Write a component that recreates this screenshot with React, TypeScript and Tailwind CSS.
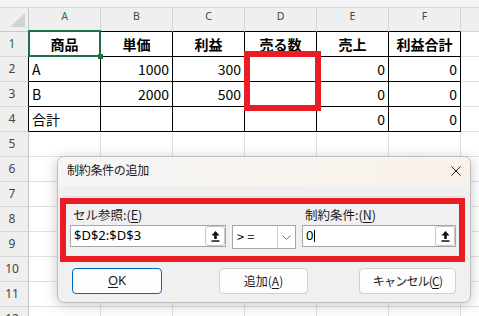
import React from 'react';

type Cell = { t: string; a?: 'l' | 'r' | 'c'; b?: boolean };

const COLS = ['A', 'B', 'C', 'D', 'E', 'F'];

const DATA: Cell[][] = [
  [
    { t: '商品', a: 'c', b: true },
    { t: '単価', a: 'c', b: true },
    { t: '利益', a: 'c', b: true },
    { t: '売る数', a: 'c', b: true },
    { t: '売上', a: 'c', b: true },
    { t: '利益合計', a: 'c', b: true },
  ],
  [
    { t: 'A', a: 'l' },
    { t: '1000', a: 'r' },
    { t: '300', a: 'r' },
    { t: '' },
    { t: '0', a: 'r' },
    { t: '0', a: 'r' },
  ],
  [
    { t: 'B', a: 'l' },
    { t: '2000', a: 'r' },
    { t: '500', a: 'r' },
    { t: '' },
    { t: '0', a: 'r' },
    { t: '0', a: 'r' },
  ],
  [
    { t: '合計', a: 'l' },
    { t: '' },
    { t: '' },
    { t: '' },
    { t: '0', a: 'r' },
    { t: '0', a: 'r' },
  ],
];

const ROWS = [1, 2, 3, 4, 5, 6, 7, 8, 9, 10, 11, 12];

function UpBtn() {
  return (
    <div className="w-[20px] h-[20px] shrink-0 bg-white border border-[#c8c8c8] rounded-[3px] flex items-center justify-center">
      <svg width="9" height="11" viewBox="0 0 9 11">
        <path d="M4.5 0 L8.5 4.5 L5.8 4.5 L5.8 8 L3.2 8 L3.2 4.5 L0.5 4.5 Z" fill="#111" />
        <rect x="0.5" y="9.3" width="8" height="1.5" fill="#111" />
      </svg>
    </div>
  );
}

export default function App() {
  return (
    <div className="relative w-[479px] h-[316px] overflow-hidden bg-white font-['Noto_Sans_CJK_JP',sans-serif] text-black">
      {/* top strip */}
      <div className="h-[8px] bg-[#f4f4f4] border-b border-[#dadada]" />
      {/* column headers */}
      <div className="flex h-[24px] bg-[#efefef] font-['Noto_Sans',sans-serif]">
        <div className="w-[29px] shrink-0 border-r border-b border-[#c8c8c8] relative">
          <svg className="absolute left-0 top-0" width="28" height="23" viewBox="0 0 28 23">
            <polygon points="25,5 25,19 10,19" fill="#d2d2d2" />
          </svg>
        </div>
        {COLS.map((c, i) => (
          <div
            key={c}
            className={`w-[72px] shrink-0 flex items-center justify-center pb-[6px] border-r border-r-[#d4d4d4] border-b border-b-black text-[10.5px] ${
              i === 0 ? 'text-[#1e7145]' : 'text-[#444]'
            }`}
          >
            {c}
          </div>
        ))}
        <div className="flex-1 border-b border-[#d4d4d4]" />
      </div>
      {/* rows */}
      {ROWS.map((r) => {
        const inT = r <= 4;
        return (
          <div key={r} className="flex h-[25px]">
            <div
              className={`w-[29px] shrink-0 flex items-center justify-center pr-[4px] bg-[#efefef] border-b border-b-[#d6d6d6] border-r font-['Noto_Sans',sans-serif] text-[12px] ${
                inT ? 'border-r-black' : 'border-r-[#c4c4c4]'
              } ${r === 1 ? 'text-[#1e7145]' : 'text-[#444]'}`}
            >
              {r}
            </div>
            {COLS.map((c, i) => {
              const d = inT ? DATA[r - 1][i] : undefined;
              const al =
                d?.a === 'c' ? 'justify-center' : d?.a === 'r' ? 'justify-end' : 'justify-start';
              return (
                <div
                  key={c}
                  className={`w-[72px] shrink-0 flex items-center px-[3px] border-r border-b text-[14px] ${al} ${
                    inT ? 'border-black' : 'border-[#e1e1e1]'
                  } ${d?.b ? 'font-bold' : ''}`}
                >
                  {d?.t}
                </div>
              );
            })}
            <div className="flex-1 border-b border-[#e1e1e1]" />
          </div>
        );
      })}

      {/* selection A1 */}
      <div className="absolute left-[28px] top-[30px] w-[73px] h-[27px] border-2 border-[#1e7145]" />
      <div className="absolute left-[98px] top-[54px] w-[5px] h-[5px] bg-[#1e7145]" />

      {/* annotation on D2:D3 */}
      <div className="absolute left-[244px] top-[51px] w-[77px] h-[60px] border-[6px] border-[#ec1c24]" />

      {/* dialog */}
      <div className="absolute left-[57px] top-[156px] w-[414px] h-[147px] rounded-[7px] border border-[#bdbdbd] bg-[#f0f0f0] shadow-[0_2px_14px_rgba(0,0,0,0.22)] overflow-hidden flex flex-col text-[#1a1a1a]">
        <div className="h-[29px] shrink-0 flex justify-between pt-[5px] pl-[9px] pr-[9px] bg-linear-to-r from-[#f5f5f5] to-[#faf2ea]">
          <span className="text-[12px] leading-[16px] tracking-[-0.3px]">制約条件の追加</span>
          <svg className="mt-[4px]" width="10" height="10" viewBox="0 0 10 10">
            <path d="M0.5 0.5 L9.5 9.5 M9.5 0.5 L0.5 9.5" stroke="#222" strokeWidth="1" />
          </svg>
        </div>
        <div className="flex-1 pt-[10px] px-[5px]">
          <div className="h-[63px] border border-[#dcdcdc] rounded-[3px] pt-[10px] pl-[6px]">
            <div className="grid grid-cols-[156px_64px_154px] gap-x-[6px] text-[12.5px] leading-[16px]">
              <div className="pl-[3px]">
                セル参照:(<u className="underline-offset-2">E</u>)
              </div>
              <div />
              <div className="pl-[3px]">
                制約条件:(<u className="underline-offset-2">N</u>)
              </div>
            </div>
            <div className="mt-[2px] grid grid-cols-[156px_64px_154px] gap-x-[6px] items-start">
              <div className="h-[22px] bg-white border border-[#a6a6a6] flex items-center justify-between pl-[3px]">
                <span className="text-[13px] font-['Noto_Sans',sans-serif] text-black">$D$2:$D$3</span>
                <UpBtn />
              </div>
              <div className="h-[24px] bg-white border border-[#a6a6a6] flex items-center">
                <span className="pl-[4px] text-[13px] tracking-[3px] text-black">&gt;=</span>
                <div className="ml-auto w-[18px] h-full border-l border-[#cfcfcf] flex items-center justify-center">
                  <svg width="9" height="5" viewBox="0 0 9 5">
                    <path d="M0.5 0.5 L4.5 4.5 L8.5 0.5" fill="none" stroke="#777" strokeWidth="1" />
                  </svg>
                </div>
              </div>
              <div className="h-[22px] bg-white border border-[#a6a6a6] flex items-center pl-[3px]">
                <span className="text-[13px] font-['Noto_Sans',sans-serif] text-black">0</span>
                <span className="ml-[1px] w-[1px] h-[12px] bg-black" />
                <div className="ml-auto">
                  <UpBtn />
                </div>
              </div>
            </div>
          </div>
          <div className="mt-[9px] pl-[9px] flex">
            <button className="w-[90px] h-[26px] rounded-[4px] border border-[#0067c0] bg-[#fdfdfd] text-[13px] font-['Noto_Sans',sans-serif] flex items-center justify-center">
              <u className="underline-offset-2">O</u>K
            </button>
            <button className="ml-[57px] w-[89px] h-[26px] rounded-[4px] border border-[#d0d0d0] bg-[#fdfdfd] text-[12px] flex items-center justify-center">
              追加(<u className="underline-offset-2">A</u>)
            </button>
            <button className="ml-[51px] w-[97px] h-[26px] rounded-[4px] border border-[#d0d0d0] bg-[#fdfdfd] text-[12px] tracking-[-0.8px] flex items-center justify-center">
              キャンセル(<u className="underline-offset-2">C</u>)
            </button>
          </div>
        </div>
      </div>

      {/* annotation on dialog fields */}
      <div className="absolute left-[60px] top-[198px] w-[405px] h-[64px] border-[6px] border-[#ec1c24]" />
    </div>
  );
}
